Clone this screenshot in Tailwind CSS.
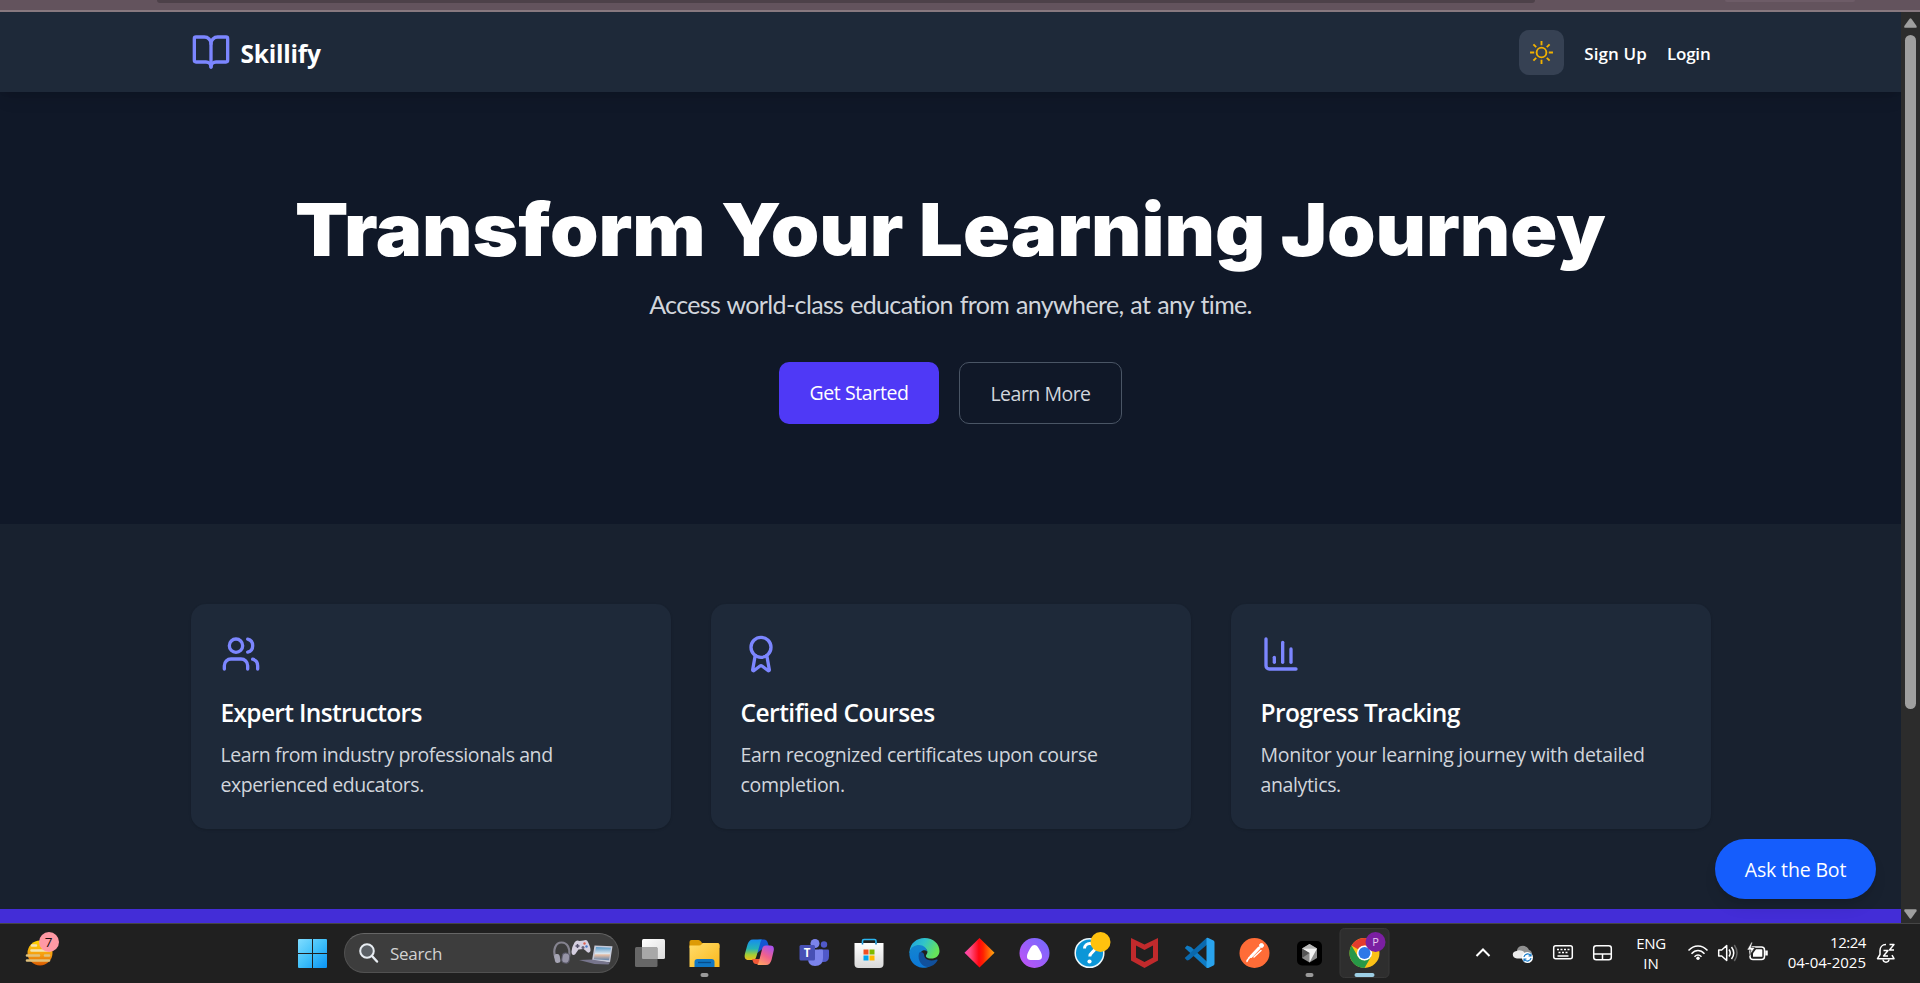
<!DOCTYPE html>
<html lang="en">
<head>
<meta charset="utf-8">
<title>Skillify</title>
<script src="https://cdn.jsdelivr.net/npm/@tailwindcss/browser@4"></script>
</head>
<body class="w-[1920px] h-[983px] overflow-hidden bg-[#101828] font-['Open_Sans',sans-serif] flex flex-col">

<!-- Browser chrome edge -->
<div class="h-3 shrink-0 bg-[#63535d] border-b-2 border-[#87787f] flex items-start">
  <div class="ml-[157px] w-[1378px] h-[3px] bg-[#4d4149] rounded-b-lg"></div>
  <div class="ml-[190px] w-[130px] h-[2px] bg-[#6d5c67] rounded-b-lg"></div>
</div>

<div class="flex h-[911px] shrink-0">
  <div class="w-[1901px] h-full overflow-hidden relative flex flex-col">
    <header class="h-20 shrink-0 bg-[#1e2939] shadow-lg relative">
      <div class="w-[1520px] h-full mx-auto flex items-center justify-between">
        <div class="flex items-center gap-[10px]">
          <svg class="size-10" viewBox="0 0 24 24" fill="none" stroke="#7c86ff" stroke-width="2" stroke-linecap="round" stroke-linejoin="round"><path d="M12 7v14"/><path d="M3 18a1 1 0 0 1-1-1V4a1 1 0 0 1 1-1h5a4 4 0 0 1 4 4 4 4 0 0 1 4-4h5a1 1 0 0 1 1 1v13a1 1 0 0 1-1 1h-6a3 3 0 0 0-3 3 3 3 0 0 0-3-3z"/></svg>
          <span class="text-[24.5px] tracking-[-0.22px] font-bold text-white whitespace-nowrap pt-1">Skillify</span>
        </div>
        <div class="flex items-center gap-5">
          <div class="size-[45px] rounded-[10px] bg-[#364153] flex items-center justify-center">
            <svg class="size-[25px]" viewBox="0 0 24 24" fill="none" stroke="#f0b100" stroke-width="1.800"><circle cx="12" cy="12" r="4.700"/><path d="M12 1v4M12 19v4M4.220 4.220l2.700 2.700M17.080 17.080l2.700 2.700M1 12h4M19 12h4M4.220 19.780l2.700-2.700M17.080 6.920l2.700-2.700"/></svg>
          </div>
          <span class="pt-[3px] text-[17px] tracking-[0.1px] font-semibold text-white whitespace-nowrap">Sign Up</span>
          <span class="pt-[3px] text-[17px] tracking-[-0.2px] font-semibold text-white whitespace-nowrap">Login</span>
        </div>
      </div>
    </header>

    <section class="h-[432px] shrink-0 bg-[#101828] flex flex-col items-center pt-[93px]">
      <h1 class="font-['Inter',sans-serif] font-black text-[73px] leading-[90px] scale-x-[1.065] text-white whitespace-nowrap">Transform Your Learning Journey</h1>
      <p class="font-['Lato',sans-serif] text-[25px] leading-[40px] tracking-[-0.64px] [word-spacing:1.1px] text-[#d1d5dc] whitespace-nowrap mt-[9px]">Access world-class education from anywhere, at any time.</p>
      <div class="flex gap-5 mt-[38px]">
        <div class="w-[160px] h-[62px] rounded-[10px] bg-[#4f39f6] text-white text-[19.5px] tracking-[-0.4px] flex items-center justify-center">Get Started</div>
        <div class="w-[163px] h-[62px] rounded-[10px] border border-[#4a5565] text-[#d1d5dc] text-[19.5px] tracking-[-0.5px] pt-[2px] flex items-center justify-center">Learn More</div>
      </div>
    </section>

    <section class="h-[385px] shrink-0 bg-[#18212f] pt-20">
      <div class="w-[1520px] mx-auto grid grid-cols-3 gap-10">
        <div class="h-[225px] rounded-[15px] bg-[#1e2939] p-[30px] shadow-sm">
          <svg class="size-10" viewBox="0 0 24 24" fill="none" stroke="#7c86ff" stroke-width="2" stroke-linecap="round" stroke-linejoin="round"><path d="M16 21v-2a4 4 0 0 0-4-4H6a4 4 0 0 0-4 4v2"/><circle cx="9" cy="7" r="4"/><path d="M22 21v-2a4 4 0 0 0-3-3.87"/><path d="M16 3.13a4 4 0 0 1 0 7.75"/></svg>
          <h3 class="mt-[21px] text-[24.5px] leading-[35px] tracking-[-0.67px] font-semibold text-white whitespace-nowrap">Expert Instructors</h3>
          <p class="mt-[10px] text-[19.5px] leading-[30px] text-[#d1d5dc] whitespace-nowrap"><span class="tracking-[-0.41px]">Learn from industry professionals and</span><br><span class="tracking-[-0.45px]">experienced educators.</span></p>
        </div>
        <div class="h-[225px] rounded-[15px] bg-[#1e2939] p-[30px] shadow-sm">
          <svg class="size-10" viewBox="0 0 24 24" fill="none" stroke="#7c86ff" stroke-width="2" stroke-linecap="round" stroke-linejoin="round"><path d="m15.477 12.89 1.515 8.526a.5.5 0 0 1-.81.47l-3.58-2.687a1 1 0 0 0-1.197 0l-3.586 2.686a.5.5 0 0 1-.81-.469l1.514-8.526"/><circle cx="12" cy="8" r="6"/></svg>
          <h3 class="mt-[21px] text-[24.5px] leading-[35px] tracking-[-0.51px] font-semibold text-white whitespace-nowrap">Certified Courses</h3>
          <p class="mt-[10px] text-[19.5px] leading-[30px] text-[#d1d5dc] whitespace-nowrap"><span class="tracking-[-0.3px]">Earn recognized certificates upon course</span><br><span class="tracking-[-0.3px]">completion.</span></p>
        </div>
        <div class="h-[225px] rounded-[15px] bg-[#1e2939] p-[30px] shadow-sm">
          <svg class="size-10" viewBox="0 0 24 24" fill="none" stroke="#7c86ff" stroke-width="2" stroke-linecap="round" stroke-linejoin="round"><path d="M3 3v16a2 2 0 0 0 2 2h16"/><path d="M18 17V9"/><path d="M13 17V5"/><path d="M8 17v-3"/></svg>
          <h3 class="mt-[21px] text-[24.5px] leading-[35px] tracking-[-0.63px] font-semibold text-white whitespace-nowrap">Progress Tracking</h3>
          <p class="mt-[10px] text-[19.5px] leading-[30px] text-[#d1d5dc] whitespace-nowrap"><span class="tracking-[-0.26px]">Monitor your learning journey with detailed</span><br><span class="tracking-[-0.36px]">analytics.</span></p>
        </div>
      </div>
    </section>

    <div class="h-[14px] shrink-0 bg-[#432dd7]"></div>

    <div class="absolute right-[25px] bottom-6 w-[161px] h-[60px] rounded-full bg-[#155dfc] shadow-lg text-white text-[19.5px] tracking-[-0.15px] pt-[2px] flex items-center justify-center">Ask the Bot</div>
  </div>

  <!-- Scrollbar -->
  <div class="w-[19px] h-full bg-[#2c2c2c] flex flex-col items-center">
    <svg class="w-[13px] h-[10px] mt-[6px]" viewBox="0 0 13 10"><path d="M5.600 .8q.9-1.100 1.800 0l5 7q.9 2-1 2h-10q-1.800 0-.9-2z" fill="#9f9f9f"/></svg>
    <div class="w-[11px] h-[674px] mt-[7px] rounded-full bg-[#9f9f9f]"></div>
    <svg class="w-[13px] h-[10px] mt-auto mb-1" viewBox="0 0 13 10"><path d="M5.600 9.200q.9 1.100 1.800 0l5-7q.9-2-1-2h-10q-1.800 0-.9 2z" fill="#9f9f9f"/></svg>
  </div>
</div>

<!-- Taskbar -->
<footer class="h-[60px] shrink-0 bg-[#202020] border-t border-[#454545] flex items-center text-white">
  <div class="w-[285px] h-full pl-[23px] shrink-0">
    <svg class="w-[40px] h-[59px]" viewBox="24 924 40 59">
      <defs><linearGradient id="sunset" x1="0" y1="0" x2="0" y2="1"><stop offset="0" stop-color="#ffd500"/><stop offset=".6" stop-color="#f59a12"/><stop offset="1" stop-color="#d95a00"/></linearGradient></defs>
      <circle cx="41" cy="953" r="12.500" fill="url(#sunset)"/>
      <g stroke="#f3e3b0" stroke-width="2.600" stroke-linecap="round"><path d="M33 945.500h4M32.500 950.500h18"/><path d="M28 955.500h12M46 955.500h4M28 960.500h22" stroke="#e0c07a"/></g>
      <circle cx="50" cy="942" r="10" fill="#ff99a4"/>
      <text x="49.500" y="947" font-size="13.500" text-anchor="middle" fill="#201010" font-family="Open Sans">7</text>
    </svg>
  </div>
  <div class="w-[59px] h-full flex items-center pl-[13px] shrink-0">
    <svg class="size-[29px]" viewBox="0 0 29 29"><defs><linearGradient id="win" x1="0" y1="0" x2="1" y2="1"><stop offset="0" stop-color="#80dcff"/><stop offset=".5" stop-color="#3fc0fa"/><stop offset="1" stop-color="#0a93f5"/></linearGradient></defs><path fill="url(#win)" d="M1 0h13v14H0V1q0-1 1-1zM15 0h13q1 0 1 1v13H15zM0 15h14v14H1q-1 0-1-1zM15 15h14v13q0 1-1 1H15z"/></svg>
  </div>
  <div class="w-[275px] h-10 mb-px shrink-0 rounded-full bg-[#3d3d3d] border border-[#515151] border-t-[#666] flex items-center pl-[14px] pr-[5px]">
    <svg class="size-[20px]" viewBox="0 0 20 20" fill="none" stroke="#e8edf2" stroke-width="2" stroke-linecap="round"><circle cx="8" cy="8" r="6.800" fill="#5b6065"/><path d="M13 13l5 5.500" stroke-width="2.400"/></svg>
    <span class="ml-[11px] pt-px text-[17px] tracking-[-0.3px] text-[#d2d2d2]">Search</span>
    <svg class="ml-auto w-[60px] h-[34px]" viewBox="553 937 60 34">
      <defs><linearGradient id="scr" x1="0" y1="0" x2="0" y2="1"><stop offset="0" stop-color="#5799c9"/><stop offset=".5" stop-color="#dce6ee"/><stop offset=".6" stop-color="#e6bda4"/><stop offset="1" stop-color="#6186ae"/></linearGradient></defs>
      <path d="M555.500 959c-3-8 0-15.500 6-15.500s9 6 7.500 14" fill="none" stroke="#85838f" stroke-width="2.200"/>
      <rect x="554.500" y="955" width="5.500" height="9" rx="2.500" fill="#a5a4b3" transform="rotate(-10 557 959)"/><rect x="562" y="954" width="7.500" height="10" rx="3.500" fill="#9694a6" stroke="#5c5b6b" transform="rotate(8 565 959)"/>
      <path d="M574.500 943.500q2-3 5-1.500l4-.5q3.500-1.500 4.500 1.500 3 6 2.500 9-2 3.500-5-.5l-2-1.500-5 .5-3.500 5q-3.500 1.500-3.500-3 .5-5 3-9z" fill="#d5cfe0"/><path d="M575.500 947h4m-2-2v4" stroke="#55516a" stroke-width="1.500"/><circle cx="584.500" cy="944.500" r="1.200" fill="#e2604f"/><circle cx="586.500" cy="947.500" r="1.200" fill="#4a78c9"/><circle cx="583" cy="948.500" r="1.500" fill="#66617a"/>
      <path d="M594.500 946.500l18 .8-2.500 16-18-1.500z" fill="#c6c9d8"/><path d="M596 948l15 .7-2 12.500-15.200-1z" fill="url(#scr)"/>
      <path d="M579 961l13-.5 18 3-1.500 2-14-.5z" fill="#77758c"/>
    </svg>
  </div>

  <!-- Pinned apps -->
  <div class="flex h-full ml-[2.500px] shrink-0">
    <svg class="w-[55px] h-[59px]" viewBox="0 0 55 59"><defs><linearGradient id="tv" x2="1" y2="1"><stop offset="0" stop-color="#fff"/><stop offset="1" stop-color="#dcdcdc"/></linearGradient></defs><rect x="20" y="15" width="23" height="20" rx="1.500" fill="url(#tv)"/><rect x="13" y="23" width="22.500" height="20" rx="1.500" fill="#777" fill-opacity=".82"/><path d="M20 23h14q1.500 0 1.500 1.500V35H21.500q-1.500 0-1.500-1.500z" fill="#a8a8a8"/></svg>

    <svg class="w-[55px] h-[59px]" viewBox="0 0 55 59"><defs><linearGradient id="fo" x2="1" y2="1"><stop offset="0" stop-color="#ffdc6b"/><stop offset="1" stop-color="#fbb81b"/></linearGradient></defs><path d="M12.500 24v-6q0-2 2-2h7q1.500 0 2.500 1.500l1 1.500h15q2.500 0 2.500 2.500V24z" fill="#dd9b06"/><path d="M12.500 21.500H22q1.500 0 3-1.500l1-1h14.500q2 0 2 2V43h-30z" fill="url(#fo)"/><path d="M17.500 43v-5q0-3 3-3h14q3 0 3 3v5z" fill="#0f76c4"/><path d="M21 38.500h13" stroke="#064c8a" stroke-width="1.300"/><rect x="23.500" y="49" width="8" height="4" rx="2" fill="#9a9a9a"/></svg>

    <svg class="w-[55px] h-[59px]" viewBox="0 0 55 59"><defs><linearGradient id="c1" x2="0" y2="1"><stop offset="0" stop-color="#168cf0"/><stop offset=".45" stop-color="#25b4b5"/><stop offset=".75" stop-color="#a8ce31"/><stop offset="1" stop-color="#eebd20"/></linearGradient><linearGradient id="c2" x1=".7" x2=".2" y2="1"><stop offset="0" stop-color="#ab52eb"/><stop offset=".5" stop-color="#f1618c"/><stop offset="1" stop-color="#ffa463"/></linearGradient></defs><path d="M24 17q1-1.500 4-1.500h4q3 0 4 4l1 3-6 2-9 7z" fill="#1456d3"/><path d="M30 15.500H21c-3 0-4.500 2-5.500 5l-2.500 9c-1 4 0 6.500 3.500 6.500h4c2.500 0 3-1 4-4l3.500-12c.7-2.500 1-4 2-4.500z" fill="url(#c1)"/><path d="M20 35h8l4-4v9H24q-2.500 0-3.200-3z" fill="#f25937"/><path d="M25 41h9c3 0 4.500-2 5.500-5l2-8.500c1-4 0-6-3.500-6h-4c-2.500 0-3.300 1.500-4 4L27 37c-.7 2.500-1 3.500-2 4z" fill="url(#c2)"/></svg>

    <svg class="w-[55px] h-[59px]" viewBox="0 0 55 59"><circle cx="28" cy="19.500" r="4.500" fill="#7b83eb"/><circle cx="37" cy="20.500" r="3.200" fill="#5059c9"/><path d="M32 25.500h9q1 0 1 1V32q0 6-5.500 6-4.500 0-4.500-5z" fill="#5059c9"/><path d="M21 25.500h14q1 0 1 1V34q0 8-8 8-7 0-7-8z" fill="#7b83eb"/><rect x="12.500" y="21" width="15.500" height="15.500" rx="1.500" fill="#4750b5"/><text x="20.200" y="33" font-size="11.500" font-weight="700" text-anchor="middle" fill="#fff" font-family="Open Sans">T</text></svg>

    <svg class="w-[55px] h-[59px]" viewBox="0 0 55 59"><defs><linearGradient id="st" x2="0" y2="1"><stop offset="0" stop-color="#fff"/><stop offset="1" stop-color="#d9d9d9"/></linearGradient></defs><path d="M20.500 21v-4q0-1.500 1.500-1.500h10.500q1.500 0 1.500 1.500v4" fill="none" stroke="#2bb5ef" stroke-width="1.600"/><path d="M12.500 19h29v21q0 4-4 4h-21q-4 0-4-4z" fill="url(#st)"/><path d="M20.500 19v1.500M34 19v1.500" stroke="#1583c8" stroke-width="1.600"/><path d="M21.500 25.500h5v5h-5z" fill="#f25022"/><path d="M27.500 25.500h5v5h-5z" fill="#7fba00"/><path d="M21.500 31.500h5v5h-5z" fill="#00a4ef"/><path d="M27.500 31.500h5v5h-5z" fill="#ffb900"/></svg>

    <svg class="w-[55px] h-[59px]" viewBox="0 0 55 59"><defs><linearGradient id="e1" x2="1" y2=".4"><stop offset="0" stop-color="#1b9de2"/><stop offset=".5" stop-color="#31c4c9"/><stop offset="1" stop-color="#66e35a"/></linearGradient><linearGradient id="e2" x2="0" y2="1"><stop offset="0" stop-color="#1485cf"/><stop offset="1" stop-color="#0b78d8"/></linearGradient></defs><path d="M12.500 28C13 19 20 14 27.500 14c9 0 15 6 15 13 0 5-4 7.500-8 7.500-5 0-6.500-2-5-4 2.500-3 0-7-5-7-6 0-11 3-12 6z" fill="url(#e1)"/><path d="M12.500 28c1-5 5.500-7 9.500-7 4.500 0 8 3 8 6.500-2-2.500-7-1-7 4 0 6 5 10.500 10 10.500-3 1.800-5 2-7.500 1.800C17 43 11.500 36 12.500 28z" fill="url(#e2)"/><path d="M22 29c-2 8 3.500 14 9 14 4-.5 7.500-3 9.500-6.500.5-1-.5-1.300-1.200-1-5.300 2-12.300 1-12.300-5.500-1-2-4-3-5-1z" fill="#11509c"/></svg>

    <svg class="w-[55px] h-[59px]" viewBox="0 0 55 59"><defs><linearGradient id="di"><stop offset="0" stop-color="#ff3fb8"/><stop offset=".2" stop-color="#ff4b80"/><stop offset=".48" stop-color="#ff0612"/><stop offset=".62" stop-color="#ff2200"/><stop offset="1" stop-color="#ffab0f"/></linearGradient></defs><path d="M27.500 14l15 14.800-15 14.800-15-14.800z" fill="url(#di)"/></svg>

    <svg class="w-[55px] h-[59px]" viewBox="0 0 55 59"><defs><linearGradient id="al" x1="0" y1="1" x2="1" y2="0"><stop offset="0" stop-color="#c552f5"/><stop offset="1" stop-color="#6f6bff"/></linearGradient></defs><circle cx="27.500" cy="29" r="15" fill="url(#al)"/><path d="M27.500 21c3 0 4 3 6 6.500 2.500 4.500 2 8.500-2 8.500h-8c-4 0-4.500-4-2-8.500 2-3.500 3-6.500 6-6.500z" fill="#fff"/></svg>

    <svg class="w-[55px] h-[59px]" viewBox="0 0 55 59"><circle cx="27.500" cy="29" r="14.300" fill="#0b96d7" stroke="#eef8fc" stroke-width="1.500"/><path d="M22.500 24.500c0-6.500 10.500-6.500 10.500-.5 0 4-5.200 4-5.200 8.500" fill="none" stroke="#fff" stroke-width="3"/><circle cx="27.500" cy="37.500" r="2.100" fill="#fff"/><circle cx="38.500" cy="18" r="10" fill="#ffc20e"/></svg>

    <svg class="w-[55px] h-[59px]" viewBox="0 0 55 59"><path d="M14 14l13.500 6.500L41 14v22.500L27.500 44 14 36.500zm5 7.500v12l8.500 4.500 8.500-4.500v-12L27.500 26z" fill="#c12a2c" fill-rule="evenodd"/></svg>

    <svg class="w-[55px] h-[59px]" viewBox="0 0 55 59"><path d="M15 21.500l4 1.500L37 39.500l-2.500 4.200L12.800 24z" fill="#0f7bc4"/><path d="M15 36.500L12.700 34 34.500 14 37 19 17 36z" fill="#0a69ad"/><path d="M34.500 14q.8-.5 1.800 0l5.200 2.500q1 .5 1 1.700v21.600q0 1.200-1 1.700l-5.200 2.400q-1 .5-1.800-.2z" fill="#29a3ed"/></svg>

    <svg class="w-[55px] h-[59px]" viewBox="0 0 55 59"><circle cx="27.500" cy="29" r="15" fill="#ff6c37"/><g stroke="#fff" fill="none" stroke-linecap="round"><circle cx="34.500" cy="21.500" r="2" fill="#fff"/><path d="M32 24L24 32.500" stroke-width="3"/><path d="M24 32l-4 4.500M27 33l7-6.500M22 33.500l-2 4" stroke-width="1.500"/></g></svg>

    <svg class="w-[55px] h-[59px]" viewBox="0 0 55 59"><rect x="15" y="17" width="25" height="24.500" rx="5" fill="#000"/><path d="M27.500 20l7.500 4.500V34l-7.500 4.500L20 34v-9.500z" fill="#8b8b8b"/><path d="M20 24.500l7.500-4.500 7.500 4.500z" fill="#b8b8b8"/><path d="M20 24.500h15L27.500 38.500V29z" fill="#f2f2f2"/><path d="M20 24.500V34l7.500-5z" fill="#555"/><rect x="23.500" y="49" width="8" height="4" rx="2" fill="#9a9a9a"/></svg>

    <svg class="w-[55px] h-[59px]" viewBox="0 0 55 59"><rect x="3" y="4.500" width="49" height="49" rx="4.500" fill="#2e2e2e" stroke="#383838"/><circle cx="27.500" cy="29" r="15" fill="#fbc116"/><path d="M27.500 29L14.500 21.500A15 15 0 0 1 40.500 21.500H27.500z" fill="#e33b2e"/><path d="M14.500 21.500A15 15 0 0 0 27.500 44L34 32.700l-6.500 3.800-6.500-3.700z" fill="#279847"/><circle cx="27.500" cy="29" r="7.600" fill="#fff"/><circle cx="27.500" cy="29" r="6" fill="#2d78e8"/><circle cx="38.500" cy="18" r="10" fill="#7b1fa2"/><text x="38.500" y="22" font-size="11" text-anchor="middle" fill="#e5c8ef" font-family="Open Sans">P</text><rect x="17.500" y="49" width="20" height="4" rx="2" fill="#9dcfe5"/></svg>
  </div>

  <!-- System tray -->
  <svg class="w-[232px] h-[59px] ml-[8.500px] shrink-0" viewBox="1400 924 232 59" fill="none" stroke="#fff" stroke-width="1.500">
    <path d="M1476.500 956l6.500-6.500 6.500 6.500" stroke-width="2"/>
    <path d="M1517 950c1-5 10-6 12 0 4 1 4 7 0 8h-12z" fill="#8f8f8f" stroke="none"/><path d="M1517 958.500c-5 0-6-7-.5-7.500 3-1.500 6 0 7.500 1l4 6.500z" fill="#ececec" stroke="none"/><circle cx="1527.500" cy="957.500" r="5.500" fill="#fff" stroke="none"/><path d="M1524 957a3.600 3.600 0 0 1 6.500-1.500m.5 2.500a3.600 3.600 0 0 1-6.500 1.500M1531 953.500v2.500h-2.500M1524 961.500v-2.500h2.500" stroke="#1479c9" stroke-width="1.200"/>
    <rect x="1553.700" y="945.700" width="18.600" height="13" rx="2"/><path d="M1557 949.500h2m1.500 0h2m1.500 0h2m1.500 0h2M1558.500 952.500h2m1.500 0h2m1.500 0h2M1557.500 956h11" stroke-width="1.700"/>
    <rect x="1593.700" y="945.700" width="17.600" height="14" rx="2.500"/><path d="M1594 954h17M1602.500 954v6"/>
  </svg>
  <div class="w-[38px] mb-[2px] text-[15px] leading-[20px] text-center shrink-0"><span class="tracking-[-0.4px]">ENG</span><br>IN</div>
  <svg class="ml-[16px] w-[84px] h-[59px] shrink-0" viewBox="1686 924 84 59" fill="none" stroke="#fff" stroke-width="1.500">
    <path d="M1688.500 950.500c5.500-6 13.500-6 19 0M1691.500 953.700c4-4.300 9-4.300 13 0M1694.500 956.700c2.500-2.500 4.500-2.500 7 0"/><circle cx="1698" cy="958.200" r="1.700" fill="#fff" stroke="none"/>
    <path d="M1718.700 950h3l5-4.500v15l-5-4.500h-3z" stroke-linejoin="round"/><path d="M1729 949.500q2.500 3.500 0 7M1731.500 947q4.500 6 0 12"/><path d="M1734.300 945q5.500 8 0 16" stroke="#666"/>
    <rect x="1750" y="947" width="14.500" height="12.500" rx="3"/><path d="M1753 956.700v-3.500l3-4h5.500q.8 0 .8.800v6.700z" fill="#fff" stroke="none"/><path d="M1766.500 950.500v5" stroke-width="2.500"/><path d="M1751.500 942l-4.500 8h4l-1.500 5.500 5.500-8h-4l1.500-5z" fill="#fff" stroke="#202020" stroke-width=".6"/>
  </svg>
  <div class="w-[96px] mb-[4px] text-[15px] leading-[20px] text-right shrink-0"><span class="tracking-[-0.45px]">12:24</span><br><span>04-04-2025</span></div>
  <svg class="ml-[10px] w-[22px] h-[59px] shrink-0" viewBox="1876 924 22 59" fill="none" stroke="#fff" stroke-width="1.500" stroke-linejoin="round"><path d="M1886 944.500c-4 0-6 3-6 6v4l-2.500 4.200h16.500l-2-3.500"/><path d="M1883 959.500c.5 3.500 5.500 3.500 6 0"/><path d="M1883.500 950.500h4.500l-4.500 5.500h4.500M1889.500 944.500h4.500l-4.500 5.500h4.500" stroke-width="1.400"/></svg>
</footer>
</body>
</html>
